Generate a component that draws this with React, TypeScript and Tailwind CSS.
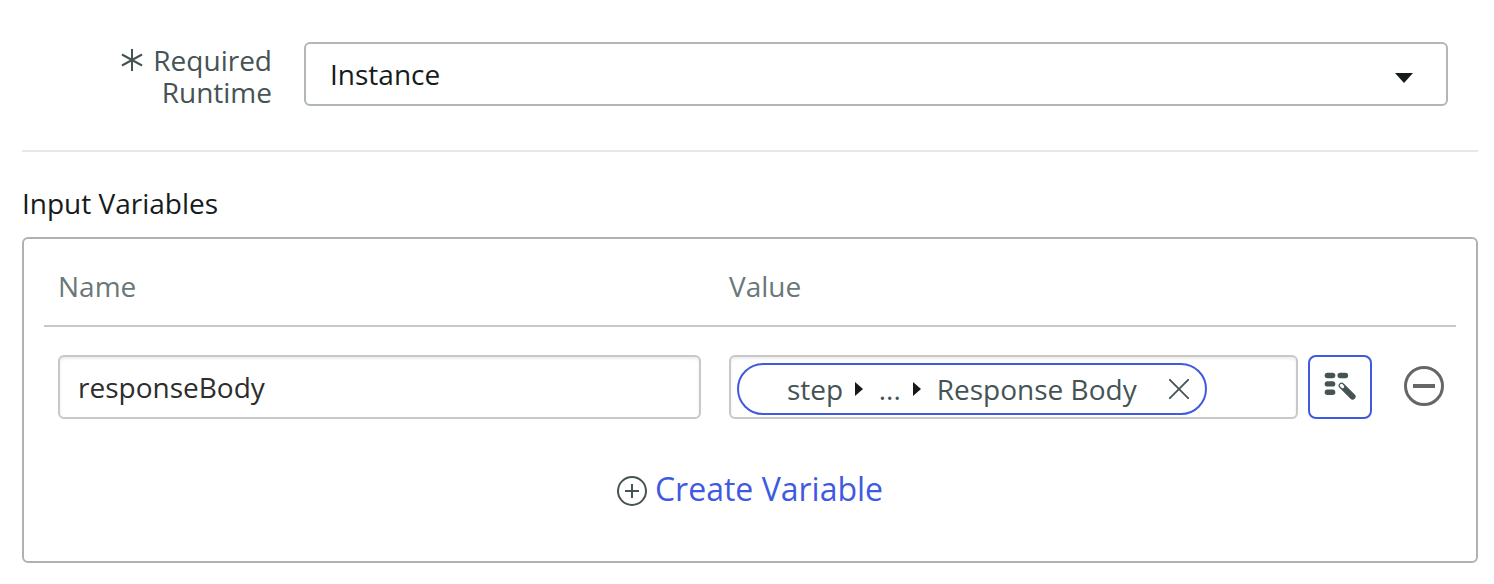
import React from "react";

function Caret({ className }: { className: string }) {
  return (
    <svg className={className} viewBox="0 0 8 14" fill="#161a1d">
      <path d="M0 0L8 7L0 14Z" />
    </svg>
  );
}

export default function App() {
  return (
    <main className="h-[584px] w-[1494px] overflow-hidden bg-white pt-[42px] pr-4 pl-[22px] font-['Open_Sans',sans-serif] text-[28px] text-[#161b1c]">
      <div className="flex h-[108px] items-start">
        <label className="flex w-[250px] justify-end gap-[10px] pt-[2px] text-right leading-8 text-[#465355]">
          <svg className="mt-[5px] h-[22px] w-[22px]" viewBox="0 0 22 22" stroke="#465355" strokeWidth="2" fill="none">
            <path d="M11 0V22M1 5.5L21 16.5M21 5.5L1 16.5" />
          </svg>
          <span>Required<br />Runtime</span>
        </label>
        <div className="ml-8 flex h-16 w-[1144px] items-center justify-between rounded-[6px] border-2 border-[#b0b6b9] pr-[33px] pl-6">
          <span>Instance</span>
          <svg className="mt-[7px] h-[10px] w-[18px]" viewBox="0 0 18 10" fill="#161b1c"><path d="M0 0H18L9 10Z" /></svg>
        </div>
      </div>
      <hr className="w-[1456px] border-t-2 border-[#e7e7e7]" />
      <h2 className="mt-[31px] h-[54px] leading-10">Input Variables</h2>
      <section className="h-[326px] w-[1456px] rounded-[6px] border-2 border-[#acb2b5] px-5">
        <div className="flex h-[88px] border-b-2 border-[#c8c8c8] pt-[27px] pl-[14px] leading-10 text-[#6b7779]">
          <span className="w-[671px]">Name</span>
          <span>Value</span>
        </div>
        <div className="mt-7 flex h-16 items-center pl-[14px]">
          <div className="flex h-16 w-[643px] items-center rounded-[6px] border-2 border-[#c8c8c8] pl-[18px] text-[#2d2d2d] shadow-[inset_0_2px_3px_rgba(0,0,0,0.08)]">responseBody</div>
          <div className="ml-7 flex h-16 w-[569px] items-center rounded-[6px] border-2 border-[#c8c8c8] pt-[4px] pl-[6px] shadow-[inset_0_2px_3px_rgba(0,0,0,0.08)]">
            <div className="flex h-[52px] w-[470px] items-center rounded-full border-2 border-[#3f5ae0] bg-white pl-12 text-[#465355]">
              <span>step</span>
              <Caret className="ml-3 h-[14px] w-2" />
              <span className="ml-[15.5px]">...</span>
              <Caret className="ml-3 h-[14px] w-2" />
              <span className="ml-4">Response Body</span>
              <svg className="ml-8 h-5 w-5" viewBox="0 0 20 20" stroke="#465355" strokeWidth="1.8"><path d="M0 0L20 20M20 0L0 20" /></svg>
            </div>
          </div>
          <button className="ml-[10px] flex h-16 w-16 items-center justify-center rounded-[8px] border-2 border-[#3f5ae0]" aria-label="Map value">
            <svg className="h-8 w-8" viewBox="0 0 32 32">
              <g fill="#465355">
                <rect x="0.7" y="1.8" width="10.6" height="5.4" rx="2.7" />
                <rect x="13.5" y="1.8" width="10.6" height="5.4" rx="2.7" />
                <rect x="0.7" y="10.2" width="10.6" height="5.4" rx="2.7" />
                <rect x="0.7" y="18.6" width="10.6" height="5.4" rx="2.7" />
              </g>
              <path d="M17.6 14.6L28.6 25.6" stroke="#465355" strokeWidth="6" strokeLinecap="round" />
              <path d="M17.4 14.4L18.6 15.6" stroke="#fff" strokeWidth="3.2" strokeLinecap="round" />
            </svg>
          </button>
          <button className="mb-[2px] ml-8" aria-label="Remove variable">
            <svg className="h-10 w-10" viewBox="0 0 40 40" fill="none" stroke="#666">
              <circle cx="20" cy="20" r="18.5" strokeWidth="3" />
              <path d="M9 20H31" strokeWidth="4" />
            </svg>
          </button>
        </div>
        <div className="mt-[48px] flex items-center justify-center leading-[44px]">
          <svg className="mt-[4px] mr-[8px] h-[30px] w-[30px]" viewBox="0 0 30 30" fill="none" stroke="#465355" strokeWidth="2">
            <circle cx="15" cy="15" r="14" />
            <path d="M8 15H22M15 8V22" />
          </svg>
          <a className="text-[32px] text-[#3f5ae0]">Create Variable</a>
        </div>
      </section>
    </main>
  );
}
